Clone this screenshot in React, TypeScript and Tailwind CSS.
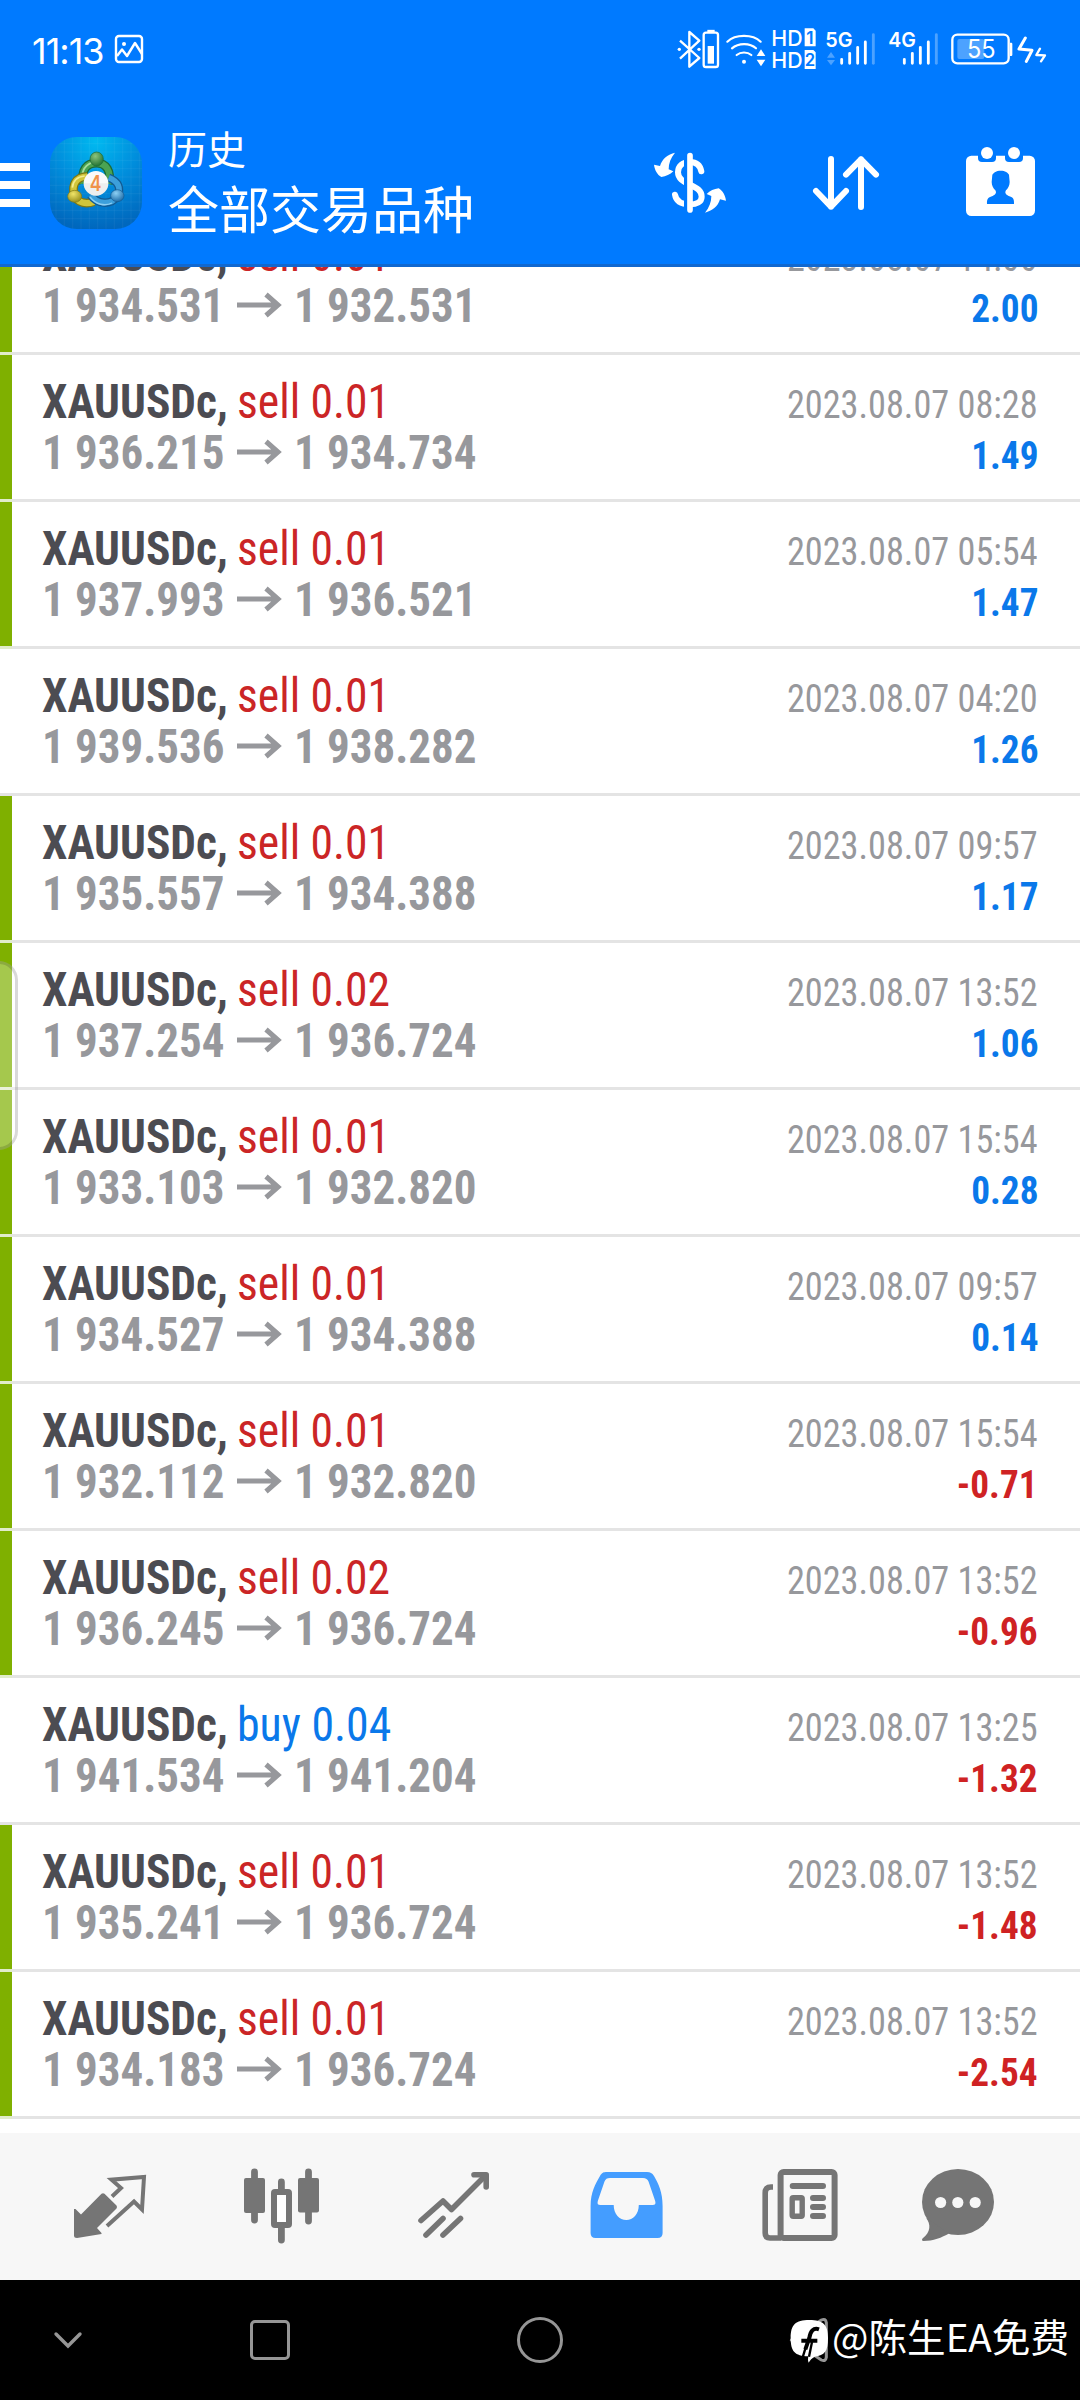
import React from 'react';

type Deal = {
  side: 'sell' | 'buy';
  volume: string;
  open: string;
  close: string;
  time: string;
  profit: string;
  marked: boolean;
};

const deals: Deal[] = [
  { side: 'sell', volume: '0.01', open: '1 934.531', close: '1 932.531', time: '2023.08.07 14:00', profit: '2.00', marked: true },
  { side: 'sell', volume: '0.01', open: '1 936.215', close: '1 934.734', time: '2023.08.07 08:28', profit: '1.49', marked: true },
  { side: 'sell', volume: '0.01', open: '1 937.993', close: '1 936.521', time: '2023.08.07 05:54', profit: '1.47', marked: true },
  { side: 'sell', volume: '0.01', open: '1 939.536', close: '1 938.282', time: '2023.08.07 04:20', profit: '1.26', marked: false },
  { side: 'sell', volume: '0.01', open: '1 935.557', close: '1 934.388', time: '2023.08.07 09:57', profit: '1.17', marked: true },
  { side: 'sell', volume: '0.02', open: '1 937.254', close: '1 936.724', time: '2023.08.07 13:52', profit: '1.06', marked: true },
  { side: 'sell', volume: '0.01', open: '1 933.103', close: '1 932.820', time: '2023.08.07 15:54', profit: '0.28', marked: true },
  { side: 'sell', volume: '0.01', open: '1 934.527', close: '1 934.388', time: '2023.08.07 09:57', profit: '0.14', marked: true },
  { side: 'sell', volume: '0.01', open: '1 932.112', close: '1 932.820', time: '2023.08.07 15:54', profit: '-0.71', marked: true },
  { side: 'sell', volume: '0.02', open: '1 936.245', close: '1 936.724', time: '2023.08.07 13:52', profit: '-0.96', marked: true },
  { side: 'buy', volume: '0.04', open: '1 941.534', close: '1 941.204', time: '2023.08.07 13:25', profit: '-1.32', marked: false },
  { side: 'sell', volume: '0.01', open: '1 935.241', close: '1 936.724', time: '2023.08.07 13:52', profit: '-1.48', marked: true },
  { side: 'sell', volume: '0.01', open: '1 934.183', close: '1 936.724', time: '2023.08.07 13:52', profit: '-2.54', marked: true },
];

const StatusBar: React.FC = () => (
  <div className="h-[99px] flex items-start pl-[32px] text-white">
    <span className="mt-[33px] h-[36px] leading-[36px] text-[36px] tracking-[-1px] font-['Inter'] font-normal">11:13</span>
    <svg className="mt-[34px] ml-[10px] w-[30px] h-[30px]" viewBox="0 0 30 30" fill="none" stroke="currentColor" strokeWidth="2.4" strokeLinejoin="round">
      <rect x="2" y="2" width="26" height="26" rx="3" />
      <path d="M3 22 L8 15.5 L13 22 L21 9 L28 20" />
      <circle cx="10" cy="10" r="2" fill="currentColor" stroke="none" />
    </svg>

    <div className="ml-auto mr-[33px] mt-[27px] flex">
      {/* Bluetooth */}
      <svg className="w-[43px] h-[43px]" viewBox="21 21 129 129" fill="none" stroke="currentColor" strokeWidth="7" strokeLinejoin="round">
        <path d="M30 62 L88 114 L58 140 V36 L88 62 L30 116" />
        <circle cx="28" cy="88" r="5" fill="currentColor" stroke="none" />
        <circle cx="87" cy="88" r="5" fill="currentColor" stroke="none" />
        <rect x="101" y="38" width="43" height="103" rx="7" />
        <path d="M112 33 H134" />
        <rect x="113" y="78" width="19" height="53" fill="currentColor" stroke="none" />
      </svg>
      {/* Wi-Fi */}
      <svg className="ml-[5px] w-[41px] h-[43px]" viewBox="165 21 123 129" fill="none" stroke="currentColor" strokeWidth="6.5" strokeLinecap="round">
        <path d="M172 65 C196 42 248 42 272 65" />
        <path d="M186 85 C205 68 240 68 258 85" />
        <path d="M200 105 C212 95 232 95 244 105" />
        <circle cx="222" cy="125" r="6" fill="currentColor" stroke="none" />
        <path d="M273 88 L286 108 H260Z M260 119 H286 L273 139Z" fill="currentColor" stroke="none" />
      </svg>
      {/* HD */}
      <svg className="ml-[5px] w-[46px] h-[43px]" viewBox="303 21 138 129" fill="currentColor">
        <text x="304" y="77" fontFamily="Inter" fontWeight="500" fontSize="65" textLength="94" lengthAdjust="spacingAndGlyphs">HD</text>
        <text x="304" y="144" fontFamily="Inter" fontWeight="500" fontSize="65" textLength="94" lengthAdjust="spacingAndGlyphs">HD</text>
        <path d="M404 25 H430 L437 32 V79 H404Z M404 90 H430 L437 97 V147 H404Z" />
        <text x="420" y="71" textAnchor="middle" fill="#007aff" fontFamily="Inter" fontWeight="600" fontSize="52">1</text>
        <text x="420" y="138" textAnchor="middle" fill="#007aff" fontFamily="Inter" fontWeight="600" fontSize="50">2</text>
      </svg>
      {/* 5G */}
      <svg className="ml-[8px] w-[51px] h-[43px]" viewBox="465 21 153 129" fill="currentColor" stroke="currentColor">
        <text x="466" y="81" stroke="none" fontFamily="Inter" fontWeight="600" fontSize="62" textLength="82" lengthAdjust="spacingAndGlyphs">5G</text>
        <path d="M483 96 L495 113 H471Z M471 120 H495 L483 136Z" stroke="none" opacity="0.3" />
        <path d="M515 118 V130 M539 100 V130 M563 82 V130 M586 66 V130" strokeWidth="8.5" strokeLinecap="round" />
        <path d="M610 44 V130" strokeWidth="8.5" strokeLinecap="round" opacity="0.3" />
      </svg>
      {/* 4G */}
      <svg className="ml-[12px] w-[51px] h-[43px]" viewBox="654 21 153 129" fill="currentColor" stroke="currentColor">
        <text x="655" y="81" stroke="none" fontFamily="Inter" fontWeight="600" fontSize="62" textLength="83" lengthAdjust="spacingAndGlyphs">4G</text>
        <path d="M703 118 V130 M727 100 V130 M751 82 V130 M775 66 V130" strokeWidth="8.5" strokeLinecap="round" />
        <path d="M799 44 V130" strokeWidth="8.5" strokeLinecap="round" opacity="0.3" />
      </svg>
      {/* Battery */}
      <svg className="ml-[11px] w-[63px] h-[43px]" viewBox="840 21 189 129" fill="none">
        <rect x="847" y="44" width="169" height="86" rx="15" stroke="currentColor" strokeWidth="7" />
        <path d="M1020 68 H1024 Q1027 68 1027 72 V104 Q1027 108 1024 108 H1020Z" fill="currentColor" />
        <rect x="862" y="57" width="81" height="60" rx="6" fill="currentColor" opacity="0.3" />
        <text x="891" y="115" fill="currentColor" fontFamily="Inter" fontWeight="400" fontSize="75" textLength="86" lengthAdjust="spacingAndGlyphs">55</text>
      </svg>
      <svg className="ml-[4px] w-[30px] h-[43px]" viewBox="1041 21 90 129" fill="none" stroke="currentColor" strokeLinejoin="round" strokeLinecap="round">
        <path d="M1066 54 L1047 87 L1086 91 L1069 124" strokeWidth="9" />
        <path d="M1110 86 L1099 105 L1125 106 L1113 124" strokeWidth="7" />
      </svg>
    </div>
  </div>
);

const AppLogo: React.FC = () => (
  <svg className="w-[92px] h-[92px]" viewBox="30 32 276 276">
    <defs>
      <radialGradient id="sky" cx="0.5" cy="0.05" r="0.95">
        <stop offset="0" stopColor="#00b9f0" />
        <stop offset="0.5" stopColor="#008ddc" />
        <stop offset="1" stopColor="#0067bd" />
      </radialGradient>
      <radialGradient id="green" cx="0.4" cy="0.3" r="0.8">
        <stop offset="0" stopColor="#8cc47c" />
        <stop offset="1" stopColor="#176a2c" />
      </radialGradient>
      <radialGradient id="gold" cx="0.4" cy="0.3" r="0.8">
        <stop offset="0" stopColor="#f0e468" />
        <stop offset="1" stopColor="#8c8412" />
      </radialGradient>
      <radialGradient id="azure" cx="0.4" cy="0.3" r="0.8">
        <stop offset="0" stopColor="#8cd0f4" />
        <stop offset="1" stopColor="#12619f" />
      </radialGradient>
      <clipPath id="tile">
        <rect x="30" y="32" width="276" height="276" rx="80" />
      </clipPath>
    </defs>
    <g clipPath="url(#tile)">
      <rect x="30" y="32" width="276" height="276" fill="url(#sky)" />
      <path
        d="M48 32V308 M73 32V308 M98 32V308 M123 32V308 M148 32V308 M173 32V308 M198 32V308 M223 32V308 M248 32V308 M273 32V308 M298 32V308 M30 52H306 M30 77H306 M30 102H306 M30 127H306 M30 152H306 M30 177H306 M30 202H306 M30 227H306 M30 252H306 M30 277H306"
        stroke="#fff" strokeOpacity="0.1" strokeWidth="1.6"
      />
    </g>
    {/* Green figure */}
    <path d="M130 172 C122 128 142 110 169 110 C198 110 216 134 205 172" fill="none" stroke="#1d6b35" strokeWidth="27" />
    <path d="M130 172 C122 128 142 110 169 110 C198 110 216 134 205 172" fill="none" stroke="#4ba352" strokeWidth="19" />
    <path d="M127 150 C127 124 146 107 170 106" fill="none" stroke="#a6dc9a" strokeWidth="6" />
    {/* Yellow figure */}
    <path d="M142 150 C106 152 96 176 102 204 C112 232 140 234 162 226" fill="none" stroke="#7d7713" strokeWidth="26" />
    <path d="M142 150 C106 152 96 176 102 204 C112 232 140 234 162 226" fill="none" stroke="#d0c53a" strokeWidth="19" />
    <path d="M97 184 C99 164 113 151 134 149" fill="none" stroke="#f3ec90" strokeWidth="5" />
    {/* Blue figure */}
    <path d="M206 154 C236 166 244 186 232 210 C212 238 172 234 152 206" fill="none" stroke="#135b93" strokeWidth="25" />
    <path d="M206 154 C236 166 244 186 232 210 C212 238 172 234 152 206" fill="none" stroke="#3c9fdb" strokeWidth="17" />
    <path d="M150 212 C168 236 196 240 216 230" fill="none" stroke="#8fd0f2" strokeWidth="4" />
    <ellipse cx="170" cy="98" rx="20" ry="21" fill="url(#green)" stroke="#1d6b35" strokeWidth="2" />
    <ellipse cx="104" cy="210" rx="21" ry="18" fill="url(#gold)" stroke="#7d7713" strokeWidth="2" />
    <ellipse cx="232" cy="208" rx="20" ry="18" fill="url(#azure)" stroke="#135b93" strokeWidth="2" />
    <circle cx="168" cy="171" r="37" fill="#fafafa" />
    <path d="M131 171 A37 37 0 0 0 205 171 Z" fill="#dcdcdc" opacity="0.4" />
    <text x="167" y="193" textAnchor="middle" fontFamily="Inter" fontWeight="600" fontSize="64" fill="#f0924a" textLength="35" lengthAdjust="spacingAndGlyphs">4</text>
  </svg>
);

const Header: React.FC = () => (
  <div className="h-[168px] flex items-start border-b-[3px] border-[#1168cf] text-white">
    <div className="mt-[64px] w-[30px] flex flex-col gap-[10px]">
      <div className="h-[8px] bg-white"></div>
      <div className="h-[8px] bg-white"></div>
      <div className="h-[8px] bg-white"></div>
    </div>
    <div className="mt-[38px] ml-[20px]">
      <AppLogo />
    </div>
    <div className="mt-[18px] ml-[26px] font-['Noto_Sans_CJK_SC',sans-serif] font-normal">
      <div className="h-[60px] leading-[60px] text-[39px]">历史</div>
      <div className="h-[60px] leading-[60px] text-[51px]">全部交易品种</div>
    </div>

    <div className="ml-auto mr-[42px] flex items-start gap-[82px]">
      {/* Deals */}
      <svg className="mt-[51px] w-[76px] h-[66px]" viewBox="36 30 228 198" fill="none">
        <path
          d="M184 94 C180 74 166 66 150 66 C128 66 114 78 114 97 C114 115 128 124 150 134 C172 144 185 152 185 170 C185 186 170 193 150 193 C125 193 108 184 105 164"
          stroke="currentColor" strokeWidth="18" strokeLinecap="round"
        />
        <path d="M132 50 H150 V210 H132Z" fill="#007aff" />
        <path d="M150 47 V210" stroke="currentColor" strokeWidth="17" strokeLinecap="round" />
        <path d="M105 38 C84 43 66 56 60 78 L42 74 C44 90 52 104 64 111 C78 109 90 104 100 94 L86 88 C86 70 92 54 105 38Z" fill="currentColor" />
        <path d="M195 218 C216 213 234 200 240 178 L258 182 C256 166 248 152 236 145 C222 147 210 152 200 162 L214 168 C214 186 208 202 195 218Z" fill="currentColor" />
      </svg>
      {/* Sort */}
      <svg className="mt-[51px] w-[72px] h-[66px]" viewBox="510 30 216 198" fill="none" stroke="currentColor" strokeWidth="18" strokeLinecap="round" strokeLinejoin="round">
        <path d="M573 57 V200 M528 153 L573 200 L618 153" />
        <path d="M663 201 V58 M618 104 L663 58 L708 104" />
      </svg>
      {/* Period */}
      <svg className="mt-[45px] w-[74px] h-[74px]" viewBox="972 12 222 222">
        <rect x="978" y="47" width="207" height="181" rx="16" fill="currentColor" />
        <rect x="1014" y="20" width="54" height="46" rx="12" fill="#007aff" />
        <rect x="1095" y="20" width="54" height="46" rx="12" fill="#007aff" />
        <circle cx="1041" cy="39" r="18" fill="currentColor" />
        <circle cx="1122" cy="39" r="18" fill="currentColor" />
        <path
          d="M1041 192 C1040 174 1046 172 1058 168 C1068 163 1070 158 1066 151 C1060 146 1055 136 1055 126 L1057 104 C1062 98 1068 92 1082 92 C1096 92 1103 98 1107 104 L1109 126 C1109 136 1104 146 1098 151 C1094 158 1096 163 1106 168 C1118 172 1123 174 1122 192Z"
          fill="#007aff"
        />
      </svg>
    </div>
  </div>
);

const DealRow: React.FC<{ deal: Deal }> = ({ deal }) => (
  <div className="shrink-0">
    <div className="h-[144px] flex">
      <div className={deal.marked ? 'w-[12px] bg-[#7fb000]' : 'w-[12px]'}></div>
      <div className="flex-1 pt-[21px] pl-[30px] pr-[42px] leading-[51px] whitespace-nowrap font-['Roboto_Condensed','Roboto',sans-serif]">
        <div className="h-[51px] flex items-baseline text-[48px]">
          <span className="w-[195px] origin-left scale-x-[0.945] font-bold text-[#4c4c52]">XAUUSDc,</span>
          <span className={deal.side === 'sell' ? 'origin-left scale-x-[0.95] text-[#cb2526]' : 'origin-left scale-x-[0.955] text-[#0a78ea]'}>
            {deal.side} {deal.volume}
          </span>
          <span className="ml-auto origin-right scale-x-[0.93] text-[39px] text-[#97989c]">{deal.time}</span>
        </div>
        <div className="h-[51px] flex items-baseline text-[48px] font-bold text-[#97989c]">
          <span className="w-[195px] origin-left scale-x-[0.937]">{deal.open}</span>
          <svg className="w-[45px] h-[26px] -translate-y-[4px]" viewBox="0 0 45 26" fill="none" stroke="currentColor" strokeWidth="5">
            <path d="M0 13 H41 M29 2.5 L41 13 L29 23.5" />
          </svg>
          <span className="ml-[12px] origin-left scale-x-[0.937]">{deal.close}</span>
          <span className={deal.profit.startsWith('-') ? 'ml-auto origin-right scale-x-[0.955] text-[39px] text-[#cf2223]' : 'ml-auto origin-right scale-x-[0.955] text-[39px] text-[#0a78ea]'}>
            {deal.profit}
          </span>
        </div>
      </div>
    </div>
    <div className="h-[3px] flex bg-[#e4e4e4]">
      <div className={deal.marked ? 'w-[12px] bg-[#e1ecca]' : 'w-[12px]'}></div>
    </div>
  </div>
);

const TabBar: React.FC = () => (
  <div className="h-[147px] flex items-start gap-[92px] pl-[70px] pt-[27px] bg-[#f7f7f7] text-[#757575]">
    {/* Quotes */}
    <svg className="w-[80px] h-[90px]" viewBox="70 80 80 90" fill="none">
      <path d="M74 129 L75.5 129 L81 134.5 L101.5 113.8 Q103 112.5 104.5 113.8 L116.5 125.5 Q117.5 127 116.5 128.5 L97 148 L101.5 153 V154 L77 158 Q74 158 74 155.5Z" fill="currentColor" />
      <path d="M112 116.5 L121 108 L111.5 99.7 L144 97 L142 129.5 L134 121.5 L107 146" stroke="currentColor" strokeWidth="4" />
    </svg>
    {/* Charts */}
    <svg className="w-[80px] h-[90px]" viewBox="242 80 80 90" fill="none">
      <path d="M254.5 92 V140 M308.5 92 V141 M281.4 102 V112 M281.4 146 V160" stroke="currentColor" strokeWidth="6.8" strokeLinecap="round" />
      <rect x="244" y="98" width="21" height="35" rx="2" fill="currentColor" />
      <rect x="298" y="98" width="21" height="34.5" rx="2" fill="currentColor" />
      <rect x="274" y="112" width="15" height="33" rx="1" stroke="currentColor" strokeWidth="6" fill="#fff" />
    </svg>
    {/* Trade */}
    <svg className="w-[80px] h-[90px]" viewBox="414 80 80 90" fill="none" stroke="currentColor" strokeWidth="5.6" strokeLinecap="round" strokeLinejoin="round">
      <path d="M421 140.5 L443 121 L451.5 129.5 L485 96" />
      <path d="M474 94.8 H486.2 V107" />
      <path d="M426 155 L443 138.5 M443 155 L460.5 138.5" />
    </svg>
    {/* History */}
    <svg className="w-[80px] h-[90px]" viewBox="586 80 80 90">
      <path d="M590.6 126 C590.6 112 595.5 104 600 96 C602 92.5 603.5 92 607 92 H647 C650.5 92 652 93 654 96 C658.5 104 662.6 112 662.6 126 V153 Q662.6 158 657.6 158 H595.6 Q590.6 158 590.6 153Z" fill="#449dff" />
      <path d="M610 98 H643 C646 98 647.5 99.5 648.5 101.5 L655.2 121 C656 124 655 125 652.5 125 H638.8 C638.8 134 633 140 626.3 140 C619.5 140 613.7 134 613.7 125 H600.5 C598 125 597 124 597.8 121 L604.5 101.5 C605.5 99 607 98 610 98Z" fill="#f7f7f7" />
    </svg>
    {/* News */}
    <svg className="w-[80px] h-[90px]" viewBox="758 80 80 90" fill="none" stroke="currentColor">
      <rect x="780.6" y="92" width="54" height="66" rx="3" strokeWidth="6" />
      <path d="M773 107 H771 Q765.2 107 765.2 113 V153 Q765.2 158 770 158 H781" strokeWidth="5.6" />
      <path d="M792.7 106 H823 M813 118 H823 M813 127 H823 M813 136 H823" strokeWidth="6" strokeLinecap="round" />
      <rect x="792.2" y="117.7" width="10" height="18.6" rx="1" strokeWidth="5.4" />
    </svg>
    {/* Messages */}
    <svg className="w-[80px] h-[90px] -ml-[10px]" viewBox="920 80 80 90">
      <ellipse cx="958" cy="122" rx="36" ry="33" fill="currentColor" />
      <path d="M926 138 C931 144 931 152 922.5 158.5 C921.5 160 922 161 923.5 161 C933 161 942 157.5 949 153.5Z" fill="currentColor" />
      <circle cx="940.6" cy="122.5" r="5.6" fill="#f7f7f7" />
      <circle cx="957.8" cy="122.5" r="5.6" fill="#f7f7f7" />
      <circle cx="975.2" cy="122.5" r="5.6" fill="#f7f7f7" />
    </svg>
  </div>
);

const SystemNav: React.FC = () => (
  <div className="h-[120px] flex items-start bg-black">
    <svg className="mt-[50px] ml-[52px] w-[32px] h-[20px]" viewBox="0 0 32 20" fill="none" stroke="#969696" strokeWidth="3.4" strokeLinecap="round">
      <path d="M4 4 L16 16 L28 4" />
    </svg>
    <div className="mt-[40px] ml-[166px] w-[40px] h-[40px] rounded-[5px] border-[3px] border-[#969696]"></div>
    <div className="mt-[37px] ml-[227px] w-[46px] h-[46px] rounded-full border-[3px] border-[#969696]"></div>
    <svg className="mt-[36px] ml-[225px] w-[42px] h-[50px]" viewBox="54 18 126 150" fill="none">
      <path d="M64 90 L154 30 Q167 24 169 38 V142 Q167 156 154 150 Z" stroke="#969696" strokeWidth="9" strokeLinejoin="round" />
      <path d="M118 30 C160 30 174 44 174 84 C174 124 164 136 134 140 C126 144 120 150 116 158 C113 152 114 146 115 139 C74 138 62 124 62 84 C62 44 76 30 118 30Z" fill="#fff" />
      <path d="M147 58 C130 52 121 64 118 84 L106 118 M94 92 H142" stroke="#000" strokeWidth="12" />
      <path d="M106 116 L98 142 M126 96 L117 140" stroke="#000" strokeWidth="7" />
    </svg>
    <div className="ml-[2px] mt-[25px] h-[60px] leading-[60px] whitespace-nowrap text-[38.6px] text-white font-['Noto_Sans_CJK_SC',sans-serif]">@陈生EA免费</div>
  </div>
);

const App: React.FC = () => {
  return (
    <div className="relative w-[1080px] h-[2400px] flex flex-col overflow-hidden bg-white">
      <div className="bg-[#007aff]">
        <StatusBar />
        <Header />
      </div>

      {/* Deal list, scrolled partway into the first row */}
      <div className="flex-1 flex flex-col justify-end pb-[14px] overflow-hidden">
        {deals.map((deal, i) => (
          <DealRow key={i} deal={deal} />
        ))}
      </div>

      <TabBar />
      <SystemNav />

      {/* Edge panel handle */}
      <div className="absolute -left-[20px] top-[961px] w-[38px] h-[189px] rounded-[26px] border-[3px] border-black/15 bg-white/30"></div>
    </div>
  );
};

export default App;
